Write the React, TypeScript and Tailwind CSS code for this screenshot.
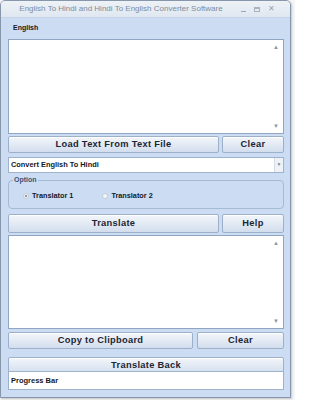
import React, { useState } from 'react';

const font = { fontFamily: '"Liberation Sans", Arial, sans-serif' };

const Btn: React.FC<{ label: string; className?: string }> = ({ label, className = '' }) => (
	<button
		className={`h-full rounded-[2px] border border-[#9db0ca] bg-gradient-to-b from-[#f3f6fb] via-[#e3eaf4] to-[#d2dded] text-[9.3px] font-bold text-[#1c2533] tracking-[0.3px] shadow-[inset_0_1px_0_#ffffff] ${className}`}
	>
		{label}
	</button>
);

const TextBox: React.FC<{ h: string }> = ({ h }) => (
	<div className={`relative ${h} border border-[#8fa5c2] bg-white`}>
		<span className="absolute right-[4px] top-[4px] text-[6px] leading-none text-[#8c96a4]">▲</span>
		<span className="absolute right-[4px] bottom-[4px] text-[6px] leading-none text-[#8c96a4]">▼</span>
	</div>
);

export default function App() {
	const [translator, setTranslator] = useState(1);

	return (
		<div className="w-[295px] h-[400px] bg-[#f4f5f7]" style={font}>
			<div className="w-[291px] h-[398px] flex flex-col border border-[#8797ab] rounded-t-[5px] bg-[#cbdcf3] shadow-[1px_1px_2px_rgba(0,0,0,0.2)]">
				{/* title bar */}
				<div className="h-[18px] flex items-center rounded-t-[4px] bg-gradient-to-b from-[#eef2f6] to-[#dfe7f1] border-b border-[#c4d3e6]">
					<div className="w-[240px] text-center text-[8px] text-[#7e8c9f]">
						English To Hindi and Hindi To English Converter Software
					</div>
					<div className="flex items-center gap-[8px] text-[#97a3b3]">
						<span className="w-[5px] h-[1px] mt-[4px] bg-[#9aa5b4]" />
						<span className="w-[6px] h-[5px] border border-[#a8b2c0] border-t-2" />
						<span className="text-[8px] leading-none">✕</span>
					</div>
				</div>

				{/* client */}
				<div className="flex-1 flex flex-col pl-[7px] pr-[6px] pb-[7px]">
					<div className="h-[21px] flex items-center pl-[5px] text-[7px] font-bold text-[#15191f]">English</div>
					<TextBox h="h-[95px]" />

					<div className="flex gap-[3px] h-[17px] mt-[2px]">
						<Btn label="Load Text From Text File" className="w-[211px]" />
						<Btn label="Clear" className="flex-1" />
					</div>

					<div className="mt-[4px] h-[16px] flex border border-[#9fb2cb] bg-white">
						<div className="flex-1 flex items-center pl-[2px] text-[7.4px] font-bold text-[#15191f]">Convert English To Hindi</div>
						<div className="w-[9px] flex items-center justify-center bg-[#eef2f7] border-l border-[#d3dce8] text-[5px] text-[#7d8897]">▼</div>
					</div>

					<div className="relative mt-[7px] h-[29px] rounded-[4px] border border-[#a6bad4] flex items-center gap-[29px] pl-[14px] pt-[3px]">
						<span className="absolute -top-[6px] left-[4px] px-[1px] bg-[#cbdcf3] text-[7px] font-bold text-[#3c5577]">Option</span>
						{[1, 2].map((n) => (
							<label key={n} className="flex items-center gap-[3px] text-[7.3px] font-bold text-[#15191f]" onClick={() => setTranslator(n)}>
								<span className="w-[6px] h-[6px] rounded-full border border-[#c3ccd8] bg-[#f3f5f8] flex items-center justify-center">
									{translator === n && <span className="w-[2px] h-[2px] rounded-full bg-[#6b7684]" />}
								</span>
								Translator {n}
							</label>
						))}
					</div>

					<div className="flex gap-[3px] h-[19px] mt-[5px]">
						<Btn label="Translate" className="w-[211px]" />
						<Btn label="Help" className="flex-1" />
					</div>

					<div className="mt-[2px]">
						<TextBox h="h-[94px]" />
					</div>

					<div className="flex gap-[4px] h-[17px] mt-[3px]">
						<Btn label="Copy to Clipboard" className="w-[185px]" />
						<Btn label="Clear" className="flex-1" />
					</div>

					<div className="h-[17px] mt-[2px]">
						<Btn label="Translate Back" className="w-full" />
					</div>

					<div className="mt-[3px] h-[19px] flex items-center pl-[2px] border border-[#9fb2cb] bg-white text-[7.5px] font-bold text-[#15191f]">
						Progress Bar
					</div>
				</div>
			</div>
		</div>
	);
}
